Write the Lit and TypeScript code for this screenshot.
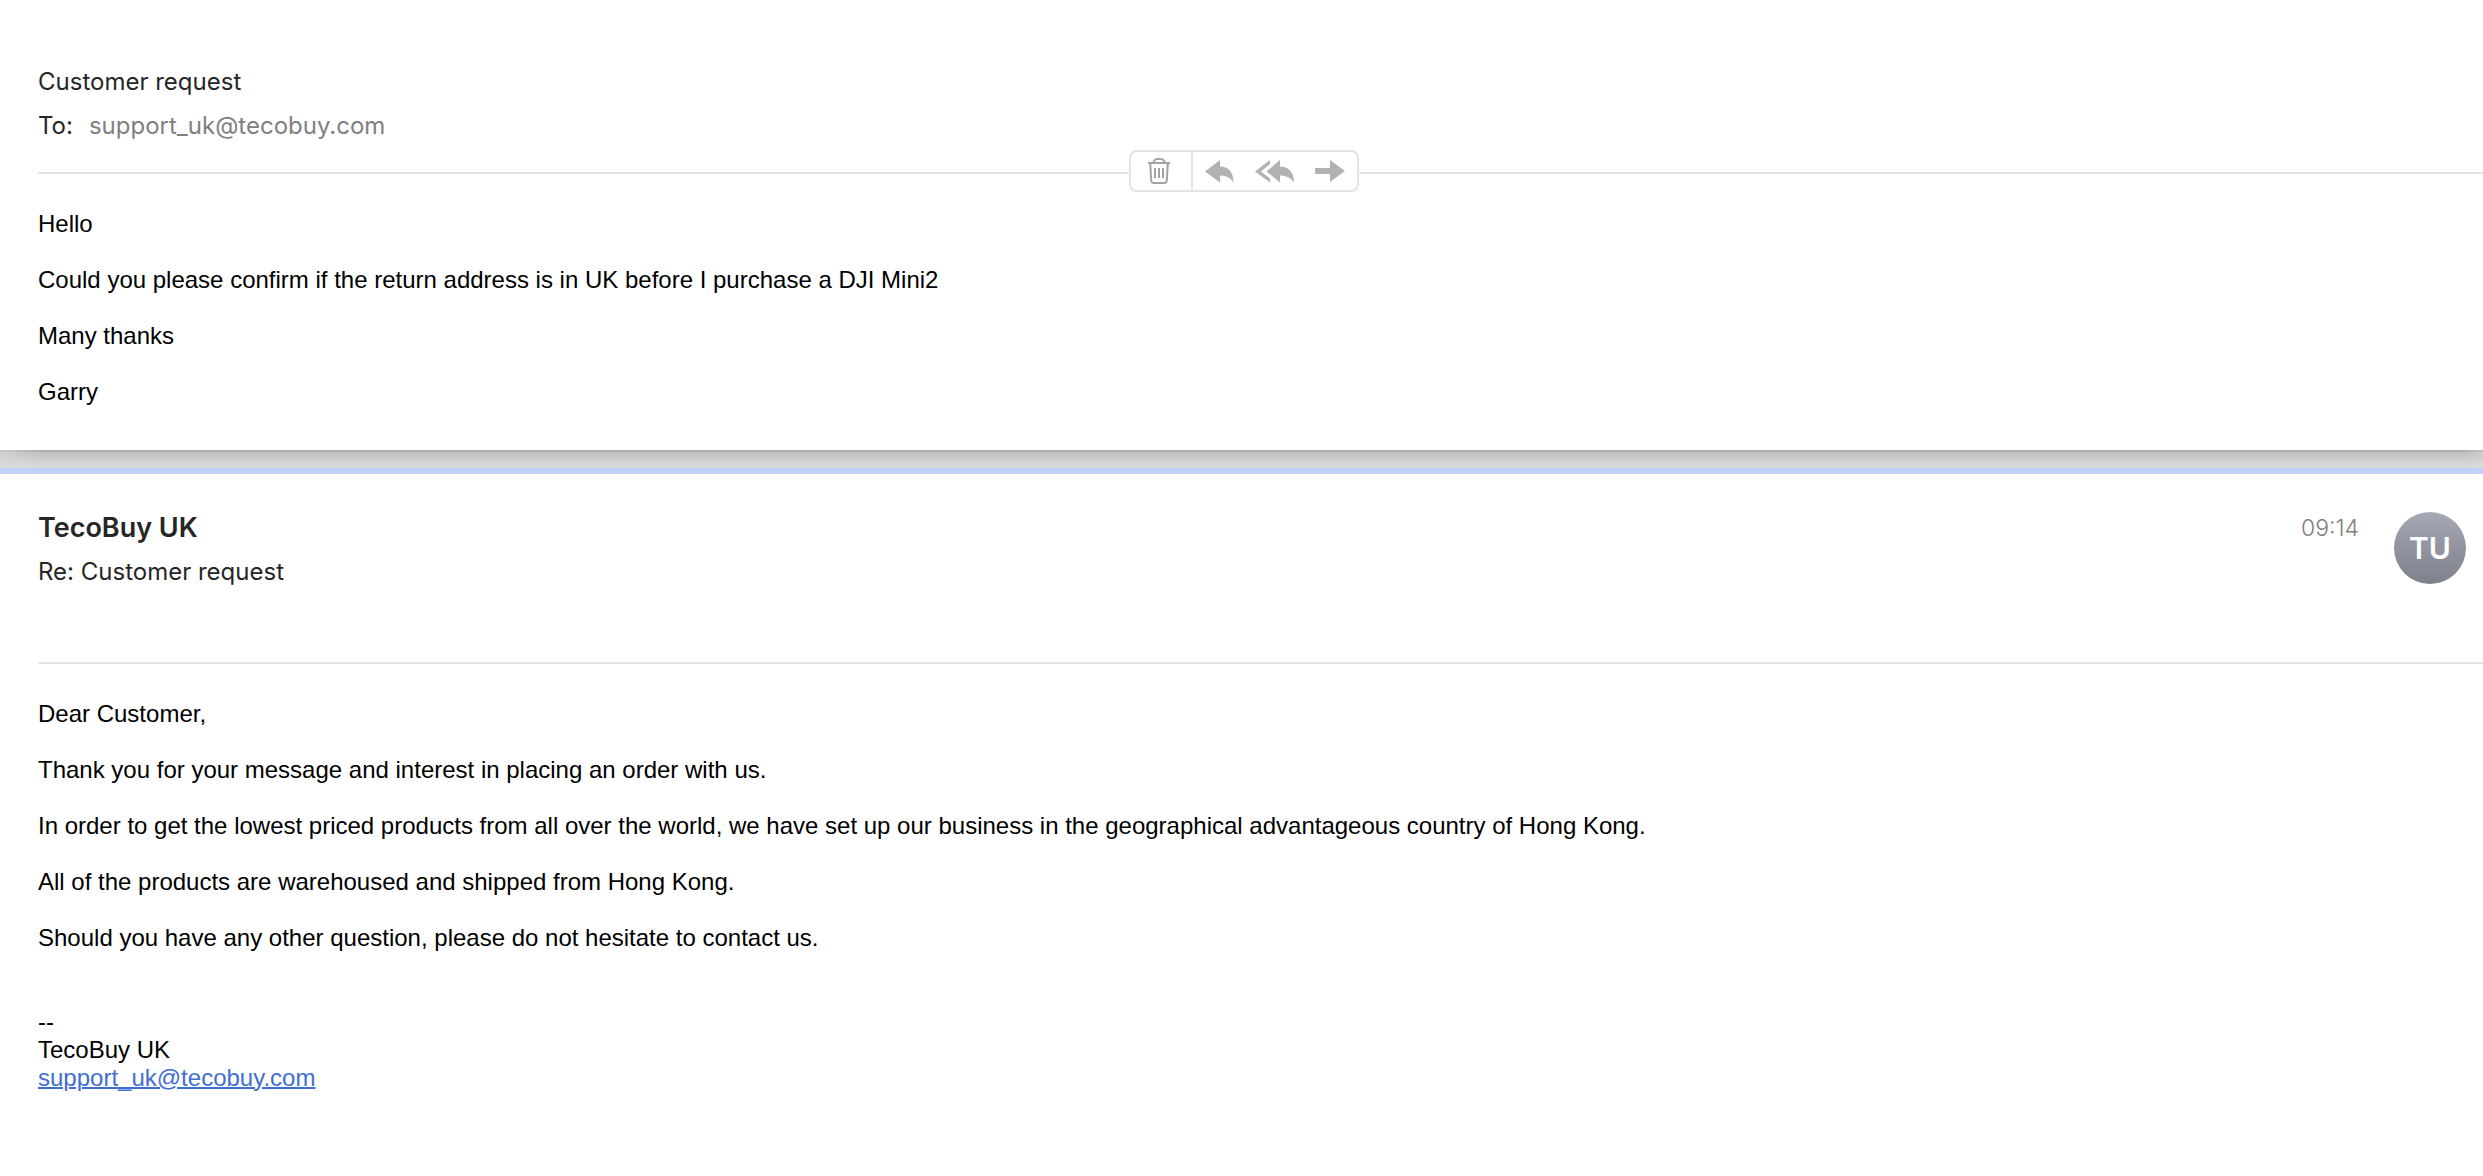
import { LitElement, html, css, svg } from "lit";
import { customElement, property } from "lit/decorators.js";

const trashIcon = svg`
  <g fill="none" stroke="#a3a3a3" stroke-width="2">
    <path d="M1 6H23"/>
    <path d="M6 6L7.500 3.200Q8.200 2 10 2H14Q15.800 2 16.500 3.200L18 6"/>
    <path d="M3.200 6L4.200 23.500Q4.400 26 6.800 26H17.200Q19.600 26 19.800 23.500L20.800 6"/>
    <path d="M8 11V21M12 11V21M16 11V21"/>
  </g>`;

const replyIcon = svg`
  <path fill="#b2b2b2" d="M0 11.500L15 0V6.500C23 6.500 28.500 11.500 28.500 22.500C25 17.500 21 15.500 15 15.500V22.500Z"/>`;

const replyAllIcon = svg`
  <path fill="#b2b2b2" d="M11.500 11.500L25 0V6.500C33 6.500 39 11.500 39 22.500C35.500 17.500 31 15.500 25 15.500V22.500Z"/>
  <path fill="#b2b2b2" d="M0 11.500L15 0V4L6 11.500L15 18.500V22.500Z"/>`;

const forwardIcon = svg`
  <path fill="#b2b2b2" d="M0 8H15V0L30 11L15 22V14H0Z"/>`;

@customElement("message-actions")
export class MessageActions extends LitElement {
  static styles = css`
    :host {
      display: flex;
      align-items: stretch;
      box-sizing: border-box;
      height: 42px;
      border: 2px solid #e4e4e4;
      border-radius: 8px;
      background: #fff;
      overflow: hidden;
    }
    .action {
      display: flex;
      align-items: center;
      justify-content: center;
      margin: 0;
      border: 0;
      padding: 0 12px;
      background: none;
      cursor: pointer;
    }
    .delete {
      padding: 0 20px 0 16px;
      border-right: 2px solid #e4e4e4;
    }
    .reply-all,
    .forward {
      padding-left: 8px;
    }
    .icon {
      display: block;
    }
  `;

  render() {
    return html`
      <button class="action delete" type="button" aria-label="Delete">
        <svg class="icon" width="24" height="28" viewBox="0 0 24 28">${trashIcon}</svg>
      </button>
      <button class="action reply" type="button" aria-label="Reply">
        <svg class="icon" width="30" height="23" viewBox="0 0 30 23">${replyIcon}</svg>
      </button>
      <button class="action reply-all" type="button" aria-label="Reply all">
        <svg class="icon" width="40" height="23" viewBox="0 0 40 23">${replyAllIcon}</svg>
      </button>
      <button class="action forward" type="button" aria-label="Forward">
        <svg class="icon" width="30" height="22" viewBox="0 0 30 22">${forwardIcon}</svg>
      </button>
    `;
  }
}

@customElement("mail-avatar")
export class MailAvatar extends LitElement {
  @property() initials = "";

  static styles = css`
    :host {
      display: flex;
      align-items: center;
      justify-content: center;
      flex: none;
      width: 72px;
      height: 72px;
      border-radius: 50%;
      background: linear-gradient(#a5a8b5, #7e818b);
      color: #fff;
      font: 600 30px/36px Inter, sans-serif;
    }
  `;

  render() {
    return html`${this.initials}`;
  }
}

@customElement("app-root")
export class AppRoot extends LitElement {
  static styles = css`
    :host {
      display: flex;
      flex-direction: column;
      min-height: 100vh;
      background: #fff;
      color: #000;
      font: 24px/28px "Liberation Sans", Arial, sans-serif;
    }
    .message {
      padding-left: 38px;
      background: #fff;
    }
    .sent {
      padding-top: 60px;
      padding-bottom: 16px;
    }
    .received {
      flex: 1;
      border-top: 6px solid #bcd1fb;
      padding-top: 32px;
    }
    .header {
      display: flex;
      align-items: flex-start;
      color: #262626;
      font: 24px/44px Inter, sans-serif;
    }
    .received .header {
      min-height: 156px;
    }
    .summary {
      flex: 1;
    }
    .sender,
    .subject,
    .recipient {
      margin: 0;
      font-size: 24px;
      font-weight: 400;
    }
    .sender {
      font-size: 27px;
      font-weight: 600;
    }
    .recipient {
      display: flex;
      gap: 16px;
    }
    .address {
      color: #808080;
    }
    .time {
      margin-right: 35px;
      color: #808080;
      font-size: 23px;
      font-weight: 300;
    }
    mail-avatar {
      margin: 6px 17px 0 0;
    }
    .divider {
      display: flex;
      align-items: center;
      justify-content: center;
      height: 2px;
      padding-right: 33px;
      background: #e4e4e4;
    }
    .sent .divider {
      margin-top: 24px;
    }
    message-actions {
      margin-bottom: 4px;
    }
    .body {
      padding-top: 36px;
    }
    .body p {
      margin: 0 0 28px;
    }
    .body .signature {
      margin: 56px 0 0;
    }
    .gap {
      height: 18px;
      background:
        linear-gradient(90deg, #dcdcdc99, #dcdcdc00 40px calc(100% - 20px), #dcdcdc66),
        linear-gradient(#adafad 0 2px, #bfbfbf 2px, #dcdcdc);
    }
    .link {
      color: #416ed2;
      text-decoration-thickness: 2px;
    }
  `;

  render() {
    return html`
      <article class="message sent">
        <header class="header">
          <div class="summary">
            <h2 class="subject">Customer request</h2>
            <p class="recipient"><span>To:</span><span class="address">support_uk@tecobuy.com</span></p>
          </div>
        </header>
        <div class="divider"><message-actions></message-actions></div>
        <div class="body">
          <p>Hello</p>
          <p>Could you please confirm if the return address is in UK before I purchase a DJI Mini2</p>
          <p>Many thanks</p>
          <p>Garry</p>
        </div>
      </article>
      <div class="gap"></div>
      <article class="message received">
        <header class="header">
          <div class="summary">
            <h2 class="sender">TecoBuy UK</h2>
            <p class="subject">Re: Customer request</p>
          </div>
          <time class="time">09:14</time>
          <mail-avatar initials="TU"></mail-avatar>
        </header>
        <div class="divider"></div>
        <div class="body">
          <p>Dear Customer,</p>
          <p>Thank you for your message and interest in placing an order with us.</p>
          <p>In order to get the lowest priced products from all over the world, we have set up our business in the geographical advantageous country of Hong Kong.</p>
          <p>All of the products are warehoused and shipped from Hong Kong.</p>
          <p>Should you have any other question, please do not hesitate to contact us.</p>
          <p class="signature">--<br />TecoBuy UK<br /><a class="link" href="mailto:support_uk@tecobuy.com">support_uk@tecobuy.com</a></p>
        </div>
      </article>
    `;
  }
}
